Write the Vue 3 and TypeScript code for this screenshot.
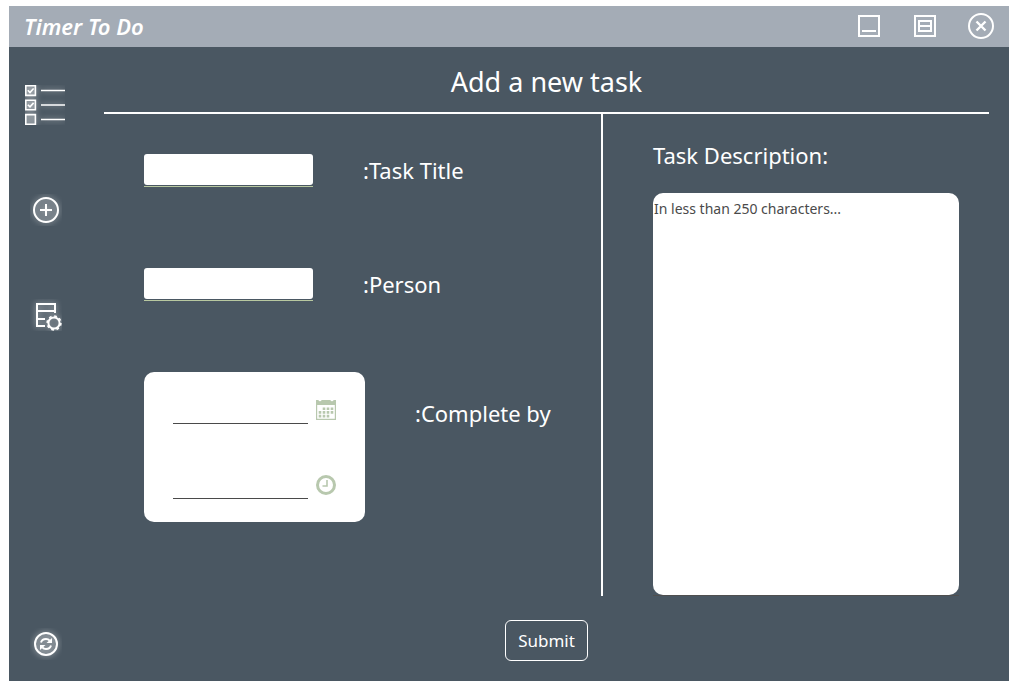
<script setup lang="ts">
import { ref } from 'vue'

const title = ref('')
const person = ref('')
const dueDate = ref('')
const dueTime = ref('')
const description = ref('')
</script>

<template>
  <div class="page">
    <div class="window">
      <header class="titlebar">
        <span class="app-name">Timer To Do</span>
        <button class="icon-btn" type="button" aria-label="Minimize">
          <svg width="26" height="26" viewBox="0 0 26 26" fill="none" stroke="#fff" stroke-width="2">
            <path d="M3 3h20v20H3zM6 18h14" />
          </svg>
        </button>
        <button class="icon-btn" type="button" aria-label="Maximize">
          <svg width="26" height="26" viewBox="0 0 26 26" fill="none" stroke="#fff" stroke-width="2">
            <path d="M3 3h20v20H3zM7 8h12v10H7zM7 13h12" />
          </svg>
        </button>
        <button class="icon-btn" type="button" aria-label="Close">
          <svg width="26" height="26" viewBox="0 0 26 26" fill="none" stroke="#fff" stroke-width="2">
            <circle cx="13" cy="13" r="12" />
            <path d="M8.500 8.500l9 9M17.500 8.500l-9 9" stroke-width="2.400" />
          </svg>
        </button>
      </header>

      <div class="body">
        <nav class="sidebar">
          <button class="icon-btn glow list" type="button" aria-label="Task list">
            <svg width="40" height="40" viewBox="0 0 40 40" fill="none" stroke="#fff">
              <path d="M.8.8h9.600v9.600H.8zM.8 15.200h9.600v9.600H.8zM.8 29.600h9.600v9.600H.8z" fill="#fff" fill-opacity=".2" stroke-width="1.600" />
              <path d="M2.800 5.300l2.200 2.200 3.600-4M2.800 19.700l2.200 2.200 3.600-4" stroke-width="1.600" />
              <path d="M16 5.500h24M16 20h24M16 34.500h24" stroke-width="1.600" />
            </svg>
          </button>
          <button class="icon-btn glow add" type="button" aria-label="Add task">
            <svg width="32" height="32" viewBox="0 0 32 32" fill="none" stroke="#fff" stroke-width="2">
              <circle cx="16" cy="16" r="12" fill="#fff" fill-opacity=".1" />
              <path d="M10 16h12M16 10v12" />
            </svg>
          </button>
          <button class="icon-btn glow settings" type="button" aria-label="Settings">
            <svg width="32" height="32" viewBox="0 0 32 32" fill="none" stroke="#fff" stroke-width="2">
              <path d="M15 27H7V5h18v9M7 12h18M7 20h8" />
              <circle cx="24" cy="24" r="5.600" stroke-width="2" />
              <circle cx="24" cy="24" r="6.900" stroke-width="1.600" stroke-dasharray="2.710 2.710" />
            </svg>
          </button>
          <button class="icon-btn glow refresh" type="button" aria-label="Refresh">
            <svg width="32" height="32" viewBox="0 0 32 32" fill="none" stroke="#fff" stroke-width="2">
              <circle cx="16" cy="16" r="11" fill="#fff" fill-opacity=".1" />
              <path d="M11 14.500c.6-2.200 2.600-3.500 5-3.500 1.500 0 2.800.6 3.700 1.600M21 17.500c-.6 2.200-2.600 3.500-5 3.500-1.500 0-2.800-.6-3.700-1.600" />
              <path d="M22 10v5h-5.500zM10 22v-5h5.500z" fill="#fff" stroke="none" />
            </svg>
          </button>
        </nav>

        <form class="main" @submit.prevent>
          <h1>Add a new task</h1>
          <div class="panes">
            <div class="details">
              <div class="row">
                <span class="field"><input id="title" v-model="title" type="text" /></span>
                <label for="title">:Task Title</label>
              </div>
              <div class="row">
                <span class="field"><input id="person" v-model="person" type="text" /></span>
                <label for="person">:Person</label>
              </div>
              <div class="row due">
                <div class="card">
                  <div class="pick">
                    <input id="due-date" v-model="dueDate" type="text" />
                    <button class="icon-btn" type="button" aria-label="Choose date">
                      <svg width="20" height="20" viewBox="0 0 20 20" fill="#b8c8ae">
                        <path fill-rule="evenodd" d="M0 0h2.500q0 1.200 1.500 1.200T5.500 0h9q0 1.200 1.500 1.200T17.500 0H20v20H0zM1.200 5v13.800h17.600V5z" />
                        <path d="M6.700 7.400h2.600v2.600H6.700zM10.700 7.400h2.600v2.600h-2.600zM14.700 7.400h2.600v2.600h-2.600zM2.700 11.100h2.600v2.600H2.700zM6.700 11.100h2.600v2.600H6.700zM10.700 11.100h2.600v2.600h-2.600zM14.700 11.100h2.600v2.600h-2.600zM2.700 14.800h2.600v2.600H2.700zM6.700 14.800h2.600v2.600H6.700zM10.700 14.800h2.600v2.600h-2.600z" />
                      </svg>
                    </button>
                  </div>
                  <div class="pick">
                    <input v-model="dueTime" type="text" aria-label="Completion time" />
                    <button class="icon-btn" type="button" aria-label="Choose time">
                      <svg width="20" height="20" viewBox="0 0 20 20" fill="none" stroke="#b8c8ae">
                        <circle cx="10" cy="10" r="8.500" stroke-width="3" />
                        <path d="M11 5v6H6.500" stroke-width="1.600" />
                      </svg>
                    </button>
                  </div>
                </div>
                <label for="due-date">:Complete by</label>
              </div>
            </div>
            <div class="description">
              <label for="description">Task Description:</label>
              <div class="area">
                <textarea id="description" v-model="description" maxlength="250" placeholder="In less than 250 characters..."></textarea>
              </div>
            </div>
          </div>
          <button class="submit" type="submit">Submit</button>
        </form>
      </div>
    </div>
  </div>
</template>

<style>
body {
  margin: 0;
  background: #fff;
}
</style>

<style scoped>
* {
  box-sizing: border-box;
}
.page {
  display: flex;
  min-height: 100vh;
  padding: 6px 7px 6px 9px;
  font-family: "Segoe UI", "Noto Sans", "Open Sans", sans-serif;
  color: #fff;
}
.window {
  flex: 1;
  display: flex;
  flex-direction: column;
  background: #4a5762;
}
.titlebar {
  display: flex;
  align-items: center;
  gap: 30px;
  padding: 7px 15px 8px;
  background: #a4acb6;
}
.app-name {
  flex: 1;
  font-size: 22px;
  line-height: 26px;
  font-weight: 600;
  font-style: italic;
}
.icon-btn {
  display: block;
  padding: 0;
  border: 0;
  background: none;
  cursor: pointer;
}
.icon-btn svg {
  display: block;
}
.body {
  flex: 1;
  display: flex;
}
.sidebar {
  flex: 0 0 95px;
  display: flex;
  flex-direction: column;
  align-items: flex-start;
  padding: 38px 16px 21px;
}
.glow {
  overflow: hidden;
}
.glow svg {
  filter: drop-shadow(0 0 3px rgba(255, 255, 255, 0.6));
}
.add,
.settings,
.refresh {
  margin-left: 5px;
}
.add {
  margin-top: 69px;
}
.settings {
  margin-top: 73px;
}
.refresh {
  margin-top: auto;
}
.main {
  flex: 1;
  display: flex;
  flex-direction: column;
  padding: 0 20px 20px 0;
}
h1 {
  margin: 0;
  padding: 15px 0 10px;
  border-bottom: 2px solid #fff;
  font-size: 27px;
  line-height: 40px;
  font-weight: 400;
  text-align: center;
}
.panes {
  flex: 1;
  display: grid;
  grid-template-columns: 1fr 386px;
}
.details {
  padding: 40px 40px 0;
  border-right: 2px solid #fff;
}
.row {
  display: flex;
  align-items: center;
  gap: 50px;
  margin-bottom: 81px;
}
label {
  font-size: 22px;
  line-height: 30px;
  padding-bottom: 2px;
  white-space: nowrap;
}
.field {
  width: 169px;
  padding-bottom: 1px;
  border-bottom: 1px solid #b8c8a0;
}
input {
  display: block;
  width: 100%;
  border: 0;
  padding: 0 4px;
  background: #fff;
  color: #4a4a4a;
  font: inherit;
  font-size: 14px;
  outline: none;
}
.field input {
  height: 31px;
  border-radius: 3px;
}
.due {
  align-items: flex-start;
  margin: -10px 0 0;
}
.due > label {
  margin-top: 26px;
}
.card {
  display: flex;
  flex-direction: column;
  gap: 47px;
  padding: 24px 29px 23px;
  border-radius: 10px;
  background: #fff;
}
.pick {
  display: flex;
  align-items: center;
  gap: 8px;
}
.pick input {
  width: 135px;
  height: 28px;
  border-bottom: 1px solid #4a4a4a;
}
.description {
  display: flex;
  flex-direction: column;
  gap: 21px;
  padding: 26px 30px 0 50px;
}
.area {
  flex: 1;
  display: flex;
  border-bottom: 1px solid #4f4f4f;
}
textarea {
  flex: 1;
  padding: 6px 1px;
  border: 0;
  border-radius: 10px;
  background: #fff;
  color: #4a4a4a;
  font: inherit;
  font-size: 14px;
  line-height: 20px;
  resize: none;
  outline: none;
}
textarea::placeholder {
  color: #4a4a4a;
  opacity: 1;
}
.submit {
  align-self: center;
  margin-top: 24px;
  padding: 0 12px;
  height: 41px;
  border: 1px solid #fff;
  border-radius: 6px;
  background: none;
  color: #fff;
  font: inherit;
  font-size: 17px;
}
</style>
